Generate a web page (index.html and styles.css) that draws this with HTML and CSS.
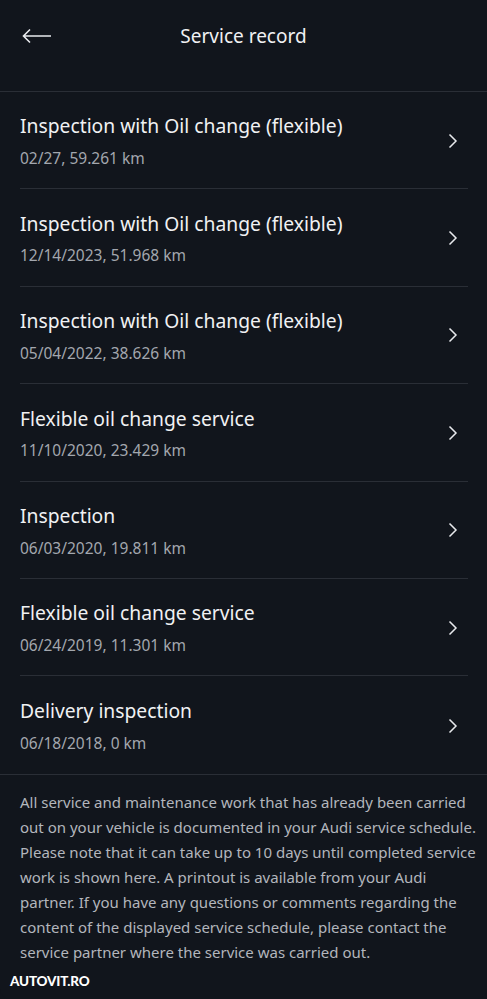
FILE: index.html
```html
<!DOCTYPE html>
<html lang="en">
<head>
<meta charset="utf-8">
<title>Service record</title>
<link rel="stylesheet" href="styles.css">
</head>
<body>
<div class="screen">
  <header class="topbar">
    <span class="back">
      <svg width="30" height="16" viewBox="0 0 30 16"><path d="M8 1.5 L1.5 8 L8 14.5 M1.5 8 H29" fill="none" stroke="#e8eaed" stroke-width="1.6"/></svg>
    </span>
    <h1 class="title">Service record</h1>
  </header>
  <ul class="records">
    <li class="record"><div class="text"><div class="name">Inspection with Oil change (flexible)</div><div class="meta">02/27, 59.261 km</div></div><svg class="chev" width="10" height="16" viewBox="0 0 10 16"><path d="M1.5 1.5 L8 8 L1.5 14.5" fill="none" stroke="#e8eaed" stroke-width="1.5"/></svg></li>
    <li class="record"><div class="text"><div class="name">Inspection with Oil change (flexible)</div><div class="meta">12/14/2023, 51.968 km</div></div><svg class="chev" width="10" height="16" viewBox="0 0 10 16"><path d="M1.5 1.5 L8 8 L1.5 14.5" fill="none" stroke="#e8eaed" stroke-width="1.5"/></svg></li>
    <li class="record"><div class="text"><div class="name">Inspection with Oil change (flexible)</div><div class="meta">05/04/2022, 38.626 km</div></div><svg class="chev" width="10" height="16" viewBox="0 0 10 16"><path d="M1.5 1.5 L8 8 L1.5 14.5" fill="none" stroke="#e8eaed" stroke-width="1.5"/></svg></li>
    <li class="record"><div class="text"><div class="name">Flexible oil change service</div><div class="meta">11/10/2020, 23.429 km</div></div><svg class="chev" width="10" height="16" viewBox="0 0 10 16"><path d="M1.5 1.5 L8 8 L1.5 14.5" fill="none" stroke="#e8eaed" stroke-width="1.5"/></svg></li>
    <li class="record"><div class="text"><div class="name">Inspection</div><div class="meta">06/03/2020, 19.811 km</div></div><svg class="chev" width="10" height="16" viewBox="0 0 10 16"><path d="M1.5 1.5 L8 8 L1.5 14.5" fill="none" stroke="#e8eaed" stroke-width="1.5"/></svg></li>
    <li class="record"><div class="text"><div class="name">Flexible oil change service</div><div class="meta">06/24/2019, 11.301 km</div></div><svg class="chev" width="10" height="16" viewBox="0 0 10 16"><path d="M1.5 1.5 L8 8 L1.5 14.5" fill="none" stroke="#e8eaed" stroke-width="1.5"/></svg></li>
    <li class="record"><div class="text"><div class="name">Delivery inspection</div><div class="meta">06/18/2018, 0 km</div></div><svg class="chev" width="10" height="16" viewBox="0 0 10 16"><path d="M1.5 1.5 L8 8 L1.5 14.5" fill="none" stroke="#e8eaed" stroke-width="1.5"/></svg></li>
  </ul>
  <p class="note">All service and maintenance work that has already been carried out on your vehicle is documented in your Audi service schedule. Please note that it can take up to 10 days until completed service work is shown here. A printout is available from your Audi partner. If you have any questions or comments regarding the content of the displayed service schedule, please contact the service partner where the service was carried out.</p>
  <div class="watermark">AUTOVIT.RO</div>
</div>
</body>
</html>
```
FILE: styles.css
```css
* { box-sizing: border-box; }
html, body { margin: 0; padding: 0; background: #11151c; }
body { font-family: "Noto Sans", "Open Sans", sans-serif; color: #eef0f2; }
.screen { position: relative; width: 487px; height: 999px; overflow: hidden; background: #11151c; border-radius: 0 0 10px 10px; }
.topbar { height: 92px; border-bottom: 1px solid #2a2e36; display: flex; align-items: flex-start; justify-content: center; position: relative; padding-top: 22px; }
.back { position: absolute; left: 22px; top: 28px; display: flex; }
.title { margin: 0; font-size: 19px; font-weight: 400; line-height: 28px; color: #f0f1f3; }
.records { list-style: none; margin: 0; padding: 0; border-bottom: 1px solid #2a2e36; }
.record { margin: 0 19px 0 20px; height: 97.4px; border-bottom: 1px solid #2a2e36; display: flex; align-items: center; justify-content: space-between; padding-top: 1px; }
.record:last-child { border-bottom: none; }
.name { font-size: 19.3px; line-height: 26px; color: #f0f1f3; }
.meta { font-size: 15.5px; line-height: 20px; color: #a3a7ae; margin-top: 8.5px; }
.chev { margin-right: 10px; }
.note { margin: 0; padding: 15px 8px 0 20px; font-size: 15px; line-height: 25px; color: #b3b6bc; }
.watermark { position: absolute; left: 10px; bottom: 10px; font-family: "Lato", sans-serif; font-weight: 900; font-size: 13.5px; letter-spacing: -0.2px; color: #ffffff; }
```
